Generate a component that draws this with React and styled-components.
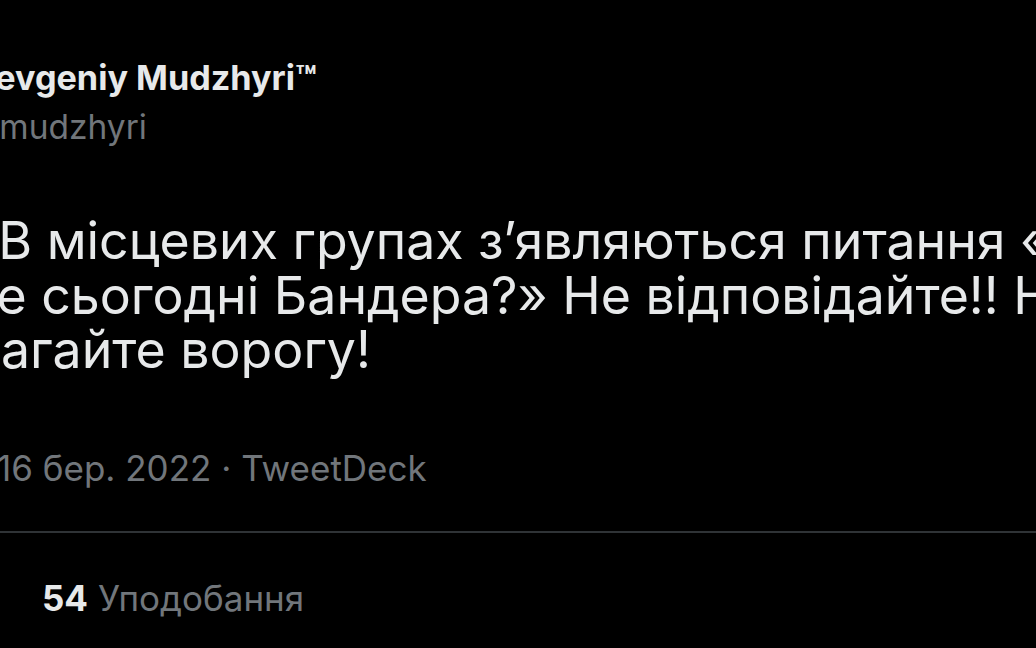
import React from "react";
import styled, { createGlobalStyle } from "styled-components";

const GlobalStyle = createGlobalStyle`
  html, body {
    margin: 0;
    padding: 0;
    background: #000;
  }
  body {
    font-family: Inter, "Noto Sans", "Liberation Sans", sans-serif;
    -webkit-font-smoothing: antialiased;
  }
`;

const Page = styled.div`
  width: 1036px;
  height: 648px;
  overflow: hidden;
  background: #000;
  color: #e7e9ea;
`;

const Tweet = styled.article`
  display: flex;
  flex-direction: column;
  padding-top: 58px;
`;

const Author = styled.header`
  display: flex;
  flex-direction: column;
  gap: 9px;
`;

/* Each row is cropped at the left edge of the screenshot; $shift says how far */
const Name = styled.div`
  margin-left: ${(p) => p.$shift}px;
  font-size: 34.2px;
  line-height: 40px;
  font-weight: 700;
  color: #e7e9ea;
  white-space: nowrap;
`;

const Handle = styled.div`
  margin-left: ${(p) => p.$shift}px;
  font-size: 33.5px;
  line-height: 40px;
  color: #71767b;
  white-space: nowrap;
`;

const Body = styled.div`
  margin-top: 66px;
  font-size: 51.8px;
  line-height: 54.5px;
  color: #e7e9ea;
  white-space: nowrap;
`;

const Line = styled.div`
  margin-left: ${(p) => p.$shift}px;
`;

const Meta = styled.div`
  margin: 71px 0 0 ${(p) => p.$shift}px;
  font-size: 35px;
  line-height: 40px;
  color: #71767b;
  white-space: nowrap;
`;

const Divider = styled.hr`
  margin: 43px 0 0 0;
  border: 0;
  border-top: 2px solid #2f3336;
  width: 1036px;
`;

const Stats = styled.div`
  display: flex;
  gap: 10px;
  padding: 45px 0 0 42px;
  font-size: 35px;
  line-height: 40px;
  white-space: nowrap;
`;

const Stat = styled.span`
  color: #71767b;
`;

const Count = styled.strong`
  color: #e7e9ea;
  font-weight: 700;
`;

export default function App() {
  return (
    <Page>
      <GlobalStyle />
      <Tweet>
        <Author>
          <Name $shift={-26}>Yevgeniy Mudzhyri™</Name>
          <Handle $shift={-33}>@mudzhyri</Handle>
        </Author>
        <Body>
          <Line $shift={-32}>«В місцевих групах з’являються питання «Де</Line>
          <Line $shift={-46}>Де сьогодні Бандера?» Не відповідайте!! Не</Line>
          <Line $shift={-39}>магайте ворогу!</Line>
        </Body>
        <Meta $shift={-3}>16 бер. 2022 · TweetDeck</Meta>
        <Divider />
        <Stats>
          <Stat>
            <Count>54</Count> Уподобання
          </Stat>
        </Stats>
      </Tweet>
    </Page>
  );
}
